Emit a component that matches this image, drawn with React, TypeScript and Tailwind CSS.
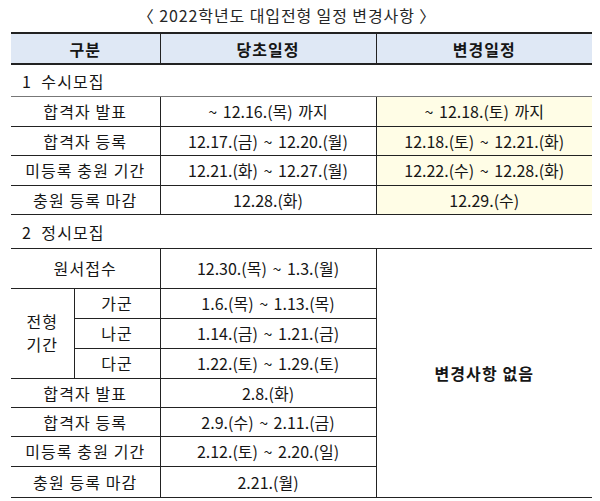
import React from "react";

const font = { fontFamily: '"Noto Sans CJK KR", "Noto Sans", sans-serif' };

const B = "border-[#222]";

function Label({ children }: { children: React.ReactNode }) {
  return <span className="tracking-[1.1px]">{children}</span>;
}

function D({ children }: { children: React.ReactNode }) {
  return <span className="[word-spacing:2px]">{children}</span>;
}

export default function App() {
  const rows1 = [
    ["합격자 발표", "~ 12.16.(목) 까지", "~ 12.18.(토) 까지", 30],
    ["합격자 등록", "12.17.(금) ~ 12.20.(월)", "12.18.(토) ~ 12.21.(화)", 29],
    ["미등록 충원 기간", "12.21.(화) ~ 12.27.(월)", "12.22.(수) ~ 12.28.(화)", 30],
    ["충원 등록 마감", "12.28.(화)", "12.29.(수)", 29],
  ] as const;
  const rows2 = [
    ["합격자 발표", "2.8.(화)", 29],
    ["합격자 등록", "2.9.(수) ~ 2.11.(금)", 29],
    ["미등록 충원 기간", "2.12.(토) ~ 2.20.(일)", 30],
    ["충원 등록 마감", "2.21.(월)", 31],
  ] as const;
  const gun = [
    ["가군", "1.6.(목) ~ 1.13.(목)"],
    ["나군", "1.14.(금) ~ 1.21.(금)"],
    ["다군", "1.22.(토) ~ 1.29.(토)"],
  ];

  return (
    <div className="w-[600px] h-[501px] bg-white text-[#161616] overflow-hidden" style={font}>
      <div className="h-[32px] flex items-center justify-center pr-[26px] pb-[3px] text-[16px] text-[#262626] tracking-[0.9px]">
        〈 2022학년도 대입전형 일정 변경사항 〉
      </div>
      <table className="ml-[11px] w-[581px] border-collapse table-fixed text-[16px] leading-none">
        <colgroup>
          <col className="w-[63px]" />
          <col className="w-[86px]" />
          <col className="w-[216px]" />
          <col className="w-[216px]" />
        </colgroup>
        <tbody>
          <tr className="h-[31px] bg-[#dfe8f5] font-bold">
            <td colSpan={2} className={`text-center border-t-2 border-b-2 ${B}`}><Label>구분</Label></td>
            <td className={`text-center border-t-2 border-b-2 border-l ${B}`}><Label>당초일정</Label></td>
            <td className={`text-center border-t-2 border-b-2 border-l ${B}`}><Label>변경일정</Label></td>
          </tr>
          <tr className="h-[32px]">
            <td colSpan={4} className="pl-[11px] border-b border-[#777] pt-[2px]">
              <Label>1&nbsp; 수시모집</Label>
            </td>
          </tr>
          {rows1.map(([a, b, c, h]) => (
            <tr key={a} style={{ height: h }}>
              <td colSpan={2} className={`text-center border-b ${B}`}>
                <Label>{a}</Label>
              </td>
              <td className={`text-center border-b border-l ${B}`}><D>{b}</D></td>
              <td className={`text-center border-b border-l ${B} bg-[#fffde6]`}><D>{c}</D></td>
            </tr>
          ))}
          <tr className="h-[34px]">
            <td colSpan={4} className={`pl-[11px] border-b ${B} pt-[2px]`}>
              <Label>2&nbsp; 정시모집</Label>
            </td>
          </tr>
          <tr className="h-[40px]">
            <td colSpan={2} className={`text-center border-b ${B}`}>
              <Label>원서접수</Label>
            </td>
            <td className={`text-center border-b border-l ${B}`}><D>12.30.(목) ~ 1.3.(월)</D></td>
            <td rowSpan={8} className={`text-center border-b border-l ${B} font-bold`}>
              <Label>변경사항 없음</Label>
            </td>
          </tr>
          {gun.map(([g, d], i) => (
            <tr key={g} className="h-[30px]">
              {i === 0 && (
                <td rowSpan={3} className={`text-center border-b ${B} leading-[23px]`}>
                  <div className="tracking-[1.1px]">전형</div>
                  <div className="tracking-[1.1px]">기간</div>
                </td>
              )}
              <td className={`text-center border-b border-l ${B}`}><Label>{g}</Label></td>
              <td className={`text-center border-b border-l ${B}`}><D>{d}</D></td>
            </tr>
          ))}
          {rows2.map(([a, b, h]) => (
            <tr key={a} style={{ height: h }}>
              <td colSpan={2} className={`text-center border-b ${B}`}>
                <Label>{a}</Label>
              </td>
              <td className={`text-center border-b border-l ${B}`}><D>{b}</D></td>
            </tr>
          ))}
        </tbody>
      </table>
    </div>
  );
}
